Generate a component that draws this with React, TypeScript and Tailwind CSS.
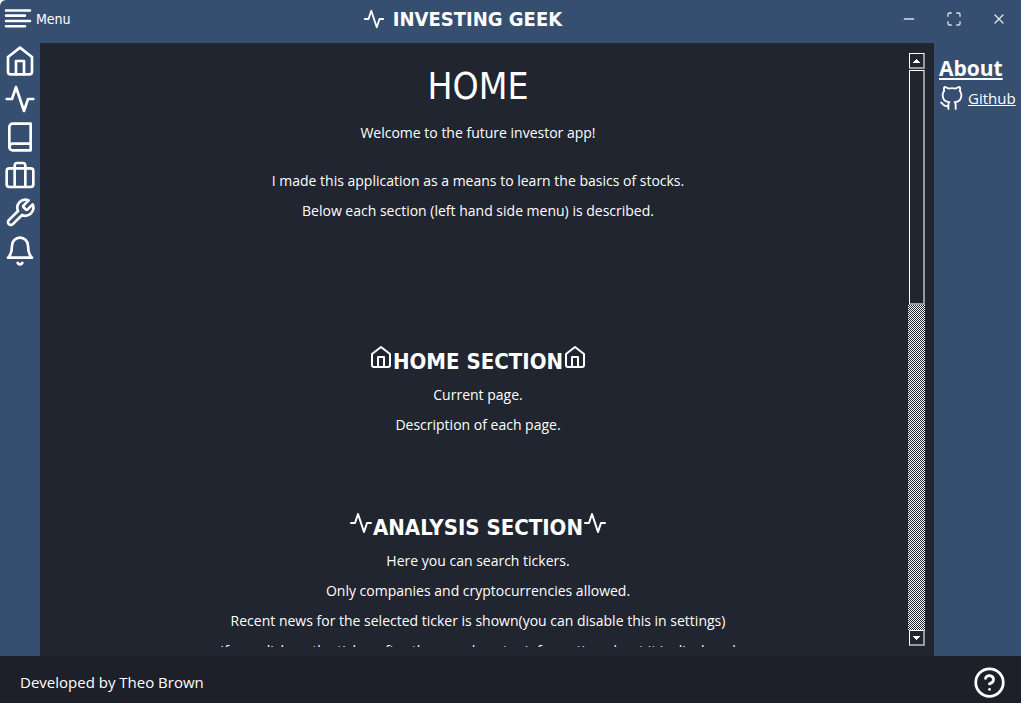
import React from "react";
import {
  FiActivity,
  FiBell,
  FiBook,
  FiGithub,
  FiHelpCircle,
  FiHome,
  FiMaximize,
  FiMinus,
  FiTool,
  FiX,
} from "react-icons/fi";

function MenuLines() {
  return (
    <svg width="28" height="22" viewBox="0 0 28 22" stroke="currentColor" strokeWidth="2.6" strokeLinecap="round" aria-hidden="true">
      <path d="M2 2.5H26M2 7.6H21M2 13H26M2 18.3H21" />
    </svg>
  );
}

function Luggage() {
  return (
    <svg width="32" height="32" viewBox="0 0 24 24" fill="none" stroke="currentColor" strokeWidth="2" strokeLinecap="round" strokeLinejoin="round" aria-hidden="true">
      <rect x="2" y="7" width="20" height="14" rx="2" />
      <path d="M16 21V5a2 2 0 0 0-2-2h-4a2 2 0 0 0-2 2v16" />
    </svg>
  );
}

const navItems = [
  { label: "Home", icon: <FiHome size={32} /> },
  { label: "Analysis", icon: <FiActivity size={32} /> },
  { label: "Dictionary", icon: <FiBook size={32} /> },
  { label: "Portfolio", icon: <Luggage /> },
  { label: "Settings", icon: <FiTool size={32} /> },
  { label: "Notifications", icon: <FiBell size={32} /> },
];

const sections = [
  {
    title: "HOME SECTION",
    Icon: FiHome,
    lines: ["Current page.", "Description of each page."],
  },
  {
    title: "ANALYSIS SECTION",
    Icon: FiActivity,
    lines: [
      "Here you can search tickers.",
      "Only companies and cryptocurrencies allowed.",
      "Recent news for the selected ticker is shown(you can disable this in settings)",
      "If you click on the ticker after the search, extra information about it is displayed",
    ],
  },
];

function ScrollRail() {
  const box = "flex w-4 shrink-0 items-center justify-center border border-r-2 border-b-2 border-white border-r-[#9a9a9a] border-b-[#9a9a9a] bg-[#21252f]";
  return (
    <div className="flex w-[17px] shrink-0 flex-col bg-[repeating-conic-gradient(#ffffff_0_25%,#21252f_0_50%)] bg-[length:2px_2px]">
      <div className="flex h-[17px] bg-[#21252f] pt-px pl-px">
        <button aria-label="Scroll up" className={`${box} h-4`}>
          <svg width="7" height="4" viewBox="0 0 7 4" fill="white" shapeRendering="crispEdges"><path d="M3 0h1v1h1v1h1v1h1v1H0V3h1V2h1V1h1z" /></svg>
        </button>
      </div>
      <div className="flex h-[236px] bg-[#21252f] pt-px pl-px">
        <div className={box} />
      </div>
      <div className="mt-auto flex h-[17px] bg-[#21252f] pl-px">
        <button aria-label="Scroll down" className={`${box} h-4`}>
          <svg width="7" height="4" viewBox="0 0 7 4" fill="white" shapeRendering="crispEdges"><path d="M0 0h7v1H6v1H5v1H4v1H3V3H2V2H1V1H0z" /></svg>
        </button>
      </div>
    </div>
  );
}

export default function App() {
  return (
    <div className="h-screen bg-white">
      <div className="flex h-full flex-col overflow-hidden rounded-tl-[6px] bg-[#364f70] font-['DejaVu_Sans_Condensed','DejaVu_Sans',sans-serif] text-sm text-white">
        <header className="flex h-[43px] shrink-0 items-start">
          <button className="flex h-[38px] w-[100px] items-center gap-1 pl-1">
            <MenuLines />
            <span>Menu</span>
          </button>
          <h1 className="flex h-[38px] flex-1 items-center justify-center gap-2 pr-[76px] text-xl font-bold">
            <FiActivity size={22} />
            INVESTING GEEK
          </h1>
          <div className="flex h-[38px] items-center gap-[29px] pr-3.5 text-[#d8dee8]">
            <button aria-label="Minimize"><FiMinus size={16} /></button>
            <button aria-label="Maximize"><FiMaximize size={16} /></button>
            <button aria-label="Close"><FiX size={16} /></button>
          </div>
        </header>

        <div className="flex min-h-0 flex-1">
          <nav className="flex w-10 shrink-0 flex-col items-center gap-1.5 pt-0.5">
            {navItems.map((item) => (
              <button key={item.label} aria-label={item.label}>{item.icon}</button>
            ))}
          </nav>

          <main className="flex min-w-0 flex-1 bg-[#21252f] py-[9px] pr-[9px]">
            <div className="min-w-0 flex-1 overflow-hidden pt-2.5 pl-2 text-center font-['Open_Sans',sans-serif] text-sm leading-[30px]">
              <h2 className="font-['DejaVu_Sans_Condensed',sans-serif] text-[37px] leading-[50px]">HOME</h2>
              <p className="mt-1.5">Welcome to the future investor app!</p>
              <p className="mt-[18px]">I made this application as a means to learn the basics of stocks.</p>
              <p>Below each section (left hand side menu) is described.</p>
              <div className="mt-[118px] flex flex-col gap-[70px]">
                {sections.map(({ title, Icon, lines }) => (
                  <section key={title}>
                    <h3 className="flex h-9 items-center justify-center font-['DejaVu_Sans_Condensed',sans-serif] text-[22px] font-bold">
                      <Icon size={24} className="mb-2.5" />
                      {title}
                      <Icon size={24} className="mb-2.5" />
                    </h3>
                    {lines.map((line) => (
                      <p key={line} className="whitespace-nowrap">{line}</p>
                    ))}
                  </section>
                ))}
              </div>
            </div>
            <ScrollRail />
          </main>

          <aside className="w-[87px] shrink-0 pt-2.5 pl-[5px] font-['Open_Sans',sans-serif]">
            <h2 className="text-[21px] leading-[30px] font-bold underline">About</h2>
            <a href="#github" className="flex items-center gap-1 text-[15px] leading-[30px] underline">
              <FiGithub size={25} strokeWidth={1.8} />
              Github
            </a>
          </aside>
        </div>

        <footer className="flex h-[47px] shrink-0 items-center justify-between bg-[#1d2029] pt-1.5 pr-[15px] pl-5 font-['Open_Sans',sans-serif] text-[15px]">
          <span>Developed by Theo Brown</span>
          <button aria-label="Help"><FiHelpCircle size={33} /></button>
        </footer>
      </div>
    </div>
  );
}
